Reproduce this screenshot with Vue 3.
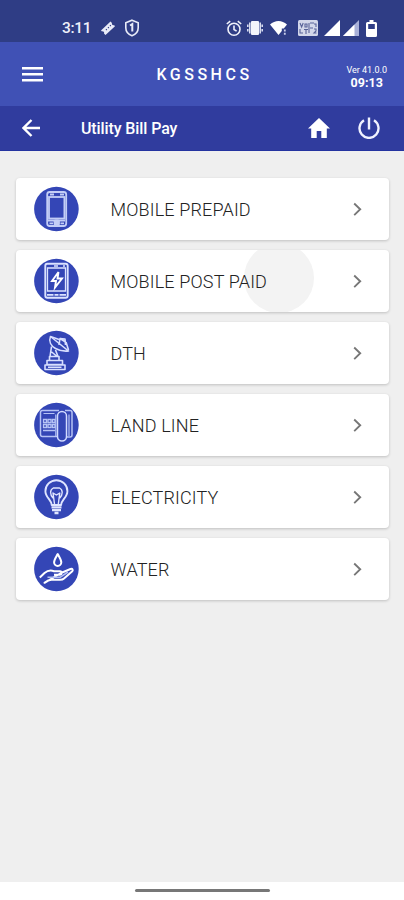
<template>
  <div class="screen">
    <header>
      <div class="status-bar">
        <span class="clock">3:11</span>
        <svg class="ticket" width="16" height="16" viewBox="0 0 16 16">
          <path d="M1 10.5 10.5 1.500 12 3a1.500 1.500 0 0 0 2 2l1 1.200L5.500 15 4 13.500a1.500 1.500 0 0 0-2-2z" fill="#e8ebf8" />
          <path d="M6 10l.8-.8M8 8l.8-.8M10 6l.8-.8" stroke="#2f3d85" stroke-width="1.200" />
        </svg>
        <svg class="shield" width="16" height="18" viewBox="0 0 16 18">
          <path d="M8 1.200 14.200 3.700v5.100c0 3.700-2.600 6.700-6.200 8-3.600-1.300-6.200-4.300-6.200-8V3.700z" fill="none" stroke="#e8ebf8" stroke-width="1.600" />
          <path d="M6 6.500 8.300 5v7.500" fill="none" stroke="#e8ebf8" stroke-width="2" />
        </svg>
        <span class="spacer"></span>
        <svg class="alarm" width="16" height="17" viewBox="0 0 16 17">
          <g fill="none" stroke="#eef0fa" stroke-width="1.600">
            <circle cx="8" cy="9.300" r="6" />
            <path d="M.8 4 4.200 1.200M15.200 4l-3.400-2.800M8 5.500v4l2.600 1.600" />
          </g>
        </svg>
        <svg class="vibrate" width="16" height="16" viewBox="0 0 16 16">
          <rect x="4" y="1" width="8" height="14" rx="1" fill="#f4f5fc" />
          <path d="M2.800 2.500v11M13.200 2.500v11M.8 4.500v2.500M.8 9v2.500M15.200 4.500v2.500M15.200 9v2.500" stroke="#dfe3f5" stroke-width="1.500" />
        </svg>
        <svg class="wifi" width="18" height="16" viewBox="0 0 18 16">
          <path d="M0 4.600C5-.2 12-.2 17 4.600L13.800 8.500h-2v2.400L8.500 15z" fill="#fff" />
          <path d="M14.800 9.500v2M14.800 12.800v2" stroke="#cbd0eb" stroke-width="1.800" />
        </svg>
        <svg class="volte" width="20" height="16" viewBox="0 0 20 16">
          <rect width="20" height="16" rx="1.500" fill="#d3d7ea" />
          <path d="M2 3l1.600 4L5.200 3M7 4h2v3H7zM2 9v4h3M6 9.500h4M8 9.500V14M11 3v10M12 3h4M12 8h3M16 9h2v2l-2 2h2.500M16 4h2v3" fill="none" stroke="#596398" stroke-width="1.100" />
        </svg>
        <svg class="signal" width="16" height="16" viewBox="0 0 16 16">
          <path d="M0 16 16 0v16z" fill="#fff" />
        </svg>
        <svg class="signal second" width="16" height="16" viewBox="0 0 16 16">
          <path d="M0 16 16 0v16z" fill="#a9b1d9" />
          <path d="M0 16 11.500 4.500V16z" fill="#fff" />
        </svg>
        <svg class="battery" width="11" height="17" viewBox="0 0 11 17">
          <path d="M3.500 0h4v2H9.500Q11 2 11 3.500v12Q11 17 9.500 17h-8Q0 17 0 15.500v-12Q0 2 1.500 2h2z" fill="#fff" />
          <path d="M2.200 4h6.600v5H2.200z" fill="#2f3d85" />
        </svg>
      </div>

      <div class="app-bar">
        <svg class="menu" width="22" height="16" viewBox="0 0 22 16">
          <path d="M0 2.200h21M0 8.200h21M0 14.200h21" stroke="#fff" stroke-width="2.500" />
        </svg>
        <h1>KGSSHCS</h1>
        <div class="version">
          <span>Ver 41.0.0</span>
          <strong>09:13</strong>
        </div>
      </div>

      <div class="toolbar">
        <svg class="back" width="20" height="18" viewBox="0 0 20 18">
          <path d="M18 9H2M9.500 1 1.500 9l8 8" fill="none" stroke="#fff" stroke-width="2.400" />
        </svg>
        <h2>Utility Bill Pay</h2>
        <svg class="home" width="22" height="20" viewBox="0 0 22 20">
          <path d="M11 0 22 10.500h-3.200V20h-5.500v-7H8.700v7H3.200v-9.500H0z" fill="#fff" />
        </svg>
        <svg class="power" width="22" height="22" viewBox="0 0 22 22">
          <path d="M11 .5v12M6 3.300a9.500 9.500 0 1 0 10 0" fill="none" stroke="#f0f2ff" stroke-width="2.400" />
        </svg>
      </div>
    </header>

    <main>
      <div v-for="item in items" :key="item.id" class="card">
        <span v-if="item.pressed" class="ripple"></span>
        <svg class="badge" width="46" height="46" viewBox="0 0 46 46">
          <circle cx="23.400" cy="23" r="22.300" fill="#3446b6" />
          <g v-if="item.id === 'prepaid'" fill="none" stroke="#c3cdf6" stroke-width="1.800">
            <rect x="14.200" y="6" width="19" height="34" rx="2.500" />
            <rect x="16" y="11" width="15.400" height="21.500" />
            <path d="M17 8.500h4M27 8.500h4M15 34.500h17" />
            <rect x="21.500" y="34.500" width="4.500" height="4.500" rx="1" fill="#c3cdf6" />
            <path d="M16.500 37.300h3.500M27.500 37.300h3.500" />
          </g>
          <g v-else-if="item.id === 'postpaid'" fill="none" stroke="#dbe2ff" stroke-width="1.900">
            <rect x="12.300" y="5.800" width="22.400" height="34" rx="2" />
            <path d="M14.500 10h18v23h-18z" stroke-width="1.300" />
            <path d="M14 36.800h6.500M26.500 36.800H33M21.500 36.800h4M21 8h4M30 8h2" stroke-width="1.700" />
            <path d="m25.500 14-6.500 9h4l-1 6.500 7-9h-4.500z" stroke="#fff" />
          </g>
          <g v-else-if="item.id === 'dth'" fill="none" stroke="#d8dfff" stroke-width="1.600" stroke-linejoin="round">
            <path d="M17.500 6.500c-2 5 .5 9.500 5 12 4.500 2.400 9 3 13 2.500z" />
            <path d="m17.500 6.500 8.500 3M26 15l1-6.500 5 .5.500 6M27 8.500l5.500 3.500M33 12l2.500 8" />
            <path d="m18.500 16.500-1.500 10M22.500 20l2.500 6.500M17.500 21l6 5M16.500 26.500h9.500v4h-9.500zM14 30.500h15.500v4H14zM12 35h20v4.500H12zM15 37.200h13.500" />
          </g>
          <g v-else-if="item.id === 'landline'" fill="none" stroke="#b6c3f5" stroke-width="1.500">
            <path d="M26 8.500H9.500Q7.500 8.500 7.500 10.500v22q0 2 2 2H25M32 8.500h5q2 0 2 2V33q0 2-2 2h-3" />
            <rect x="24.500" y="9.500" width="9" height="29.500" rx="4.500" stroke="#d2dbff" />
            <path d="M22.800 12.500V34M36 12.500V34M10.500 11.500h11" stroke-width="1.200" />
            <path d="M10.500 17.500h3v3h-3zM15 17.500h3v3h-3zM19.500 17.500h2.500v3h-2.500zM10.500 22.500h3v3h-3zM15 22.500h3v3h-3zM19.500 22.500h2.500v3h-2.500zM10 28.500h12" stroke-width="1.300" />
          </g>
          <g v-else-if="item.id === 'electricity'" fill="none" stroke="#dfe5ff" stroke-width="1.900" stroke-linejoin="round">
            <path d="M18.700 31c0-5-6.300-7.500-6.300-13.800a11 11 0 0 1 22 0c0 6.300-6.300 8.800-6.300 13.800z" />
            <path d="M20 24c-3-3.500-3.500-8 .3-10h6.200c3.800 2 3.300 6.500.3 10M21.500 30l-1.500-11 3.400 2 3.400-2-1.500 11" stroke-width="1.400" />
            <path d="M18.500 33.300h10M19 36.200h9M21.500 39h4" stroke-width="2.300" />
          </g>
          <g v-else fill="none" stroke="#fff" stroke-width="2" stroke-linejoin="round">
            <path d="M24.700 8c-2.500 4.500-3.600 6-3.600 8.300a3.600 3.600 0 0 0 7.200 0c0-2.300-1.100-3.800-3.600-8.300z" />
            <path d="m6.800 31.500 4.700-4.500c3-2.500 6-3 9.500-1.800h6c2.300 0 2.500 3 0 3.500h-6M28 27l9.500-4c2-.7 3 1 1.500 2.500L31 32.500c-1 1-2 1.300-4 1.300h-8.500c-2.500 0-4.500 1-7 3z" />
            <path d="M14.500 31.300H27l8-5.300" stroke="#b3c0f3" stroke-width="1.500" />
          </g>
        </svg>
        <span class="label">{{ item.label }}</span>
        <svg class="chevron" width="9" height="14" viewBox="0 0 9 14">
          <path d="m1.200 1.500 6 5.800-6 5.800" fill="none" stroke="#777" stroke-width="1.900" />
        </svg>
      </div>
    </main>

    <footer><span class="handle"></span></footer>
  </div>
</template>

<script setup>
const items = [
  { id: 'prepaid', label: 'MOBILE PREPAID' },
  { id: 'postpaid', label: 'MOBILE POST PAID', pressed: true },
  { id: 'dth', label: 'DTH' },
  { id: 'landline', label: 'LAND LINE' },
  { id: 'electricity', label: 'ELECTRICITY' },
  { id: 'water', label: 'WATER' }
]
</script>

<style>
body {
  margin: 0;
}
</style>

<style scoped>
.screen {
  display: flex;
  flex-direction: column;
  height: 900px;
  background: #efefef;
  font-family: Roboto, "Liberation Sans", sans-serif;
}

svg {
  display: block;
  flex: none;
}

h1,
h2 {
  margin: 0;
}

header {
  color: #fff;
}

.status-bar {
  display: flex;
  align-items: center;
  box-sizing: border-box;
  height: 42px;
  padding: 14px 27px 0 62px;
  background: #2f3d85;
}

.clock {
  width: 38px;
  font-size: 15.5px;
  font-weight: 500;
  letter-spacing: -0.3px;
  line-height: 18px;
  color: #eef0fa;
}

.shield {
  margin-left: 8px;
}

.spacer {
  flex: 1;
}

.vibrate {
  margin-left: 5px;
}

.wifi {
  margin-left: 7px;
}

.volte {
  margin-left: 10px;
}

.signal {
  margin-left: 6px;
}

.signal.second {
  margin-left: 3px;
}

.battery {
  margin-left: 7px;
}

.app-bar {
  display: grid;
  grid-template-columns: 120px 1fr 120px;
  align-items: center;
  box-sizing: border-box;
  height: 64px;
  padding: 0 17px 0 22px;
  background: #4051b5;
}

h1 {
  font-size: 16px;
  font-weight: 500;
  letter-spacing: 3.5px;
  text-align: center;
}

.version {
  display: flex;
  flex-direction: column;
  align-items: center;
  justify-self: end;
  margin-top: 5px;
  font-size: 9px;
  line-height: 11px;
}

.version strong {
  font-size: 12.5px;
  line-height: 13px;
}

.toolbar {
  display: flex;
  align-items: center;
  box-sizing: border-box;
  height: 45px;
  padding: 0 24px 0 22px;
  background: #303c9e;
  border-bottom: 1px solid #2433a0;
}

h2 {
  flex: 1;
  margin-left: 39px;
  font-size: 16px;
  font-weight: 500;
  letter-spacing: -0.1px;
}

.power {
  margin-left: 28px;
}

main {
  display: flex;
  flex: 1;
  flex-direction: column;
  gap: 10px;
  padding: 27px 15px 0 16px;
}

.card {
  position: relative;
  display: flex;
  align-items: center;
  box-sizing: border-box;
  height: 62px;
  padding: 0 27px 0 17px;
  overflow: hidden;
  background: #fff;
  border-radius: 4px;
  box-shadow: 0 1px 3px rgba(0, 0, 0, 0.2);
}

.ripple {
  position: absolute;
  top: -7px;
  left: 228px;
  width: 70px;
  height: 70px;
  background: #f3f3f3;
  border-radius: 50%;
}

.label {
  position: relative;
  flex: 1;
  margin-left: 31.5px;
  padding-top: 1px;
  font-size: 18px;
  font-weight: 300;
  letter-spacing: 0.15px;
  line-height: 22px;
  color: #222;
}

footer {
  display: flex;
  justify-content: center;
  height: 18px;
  background: #fff;
}

.handle {
  width: 135px;
  height: 3px;
  margin-top: 7px;
  background: #777;
  border-radius: 2px;
}
</style>
